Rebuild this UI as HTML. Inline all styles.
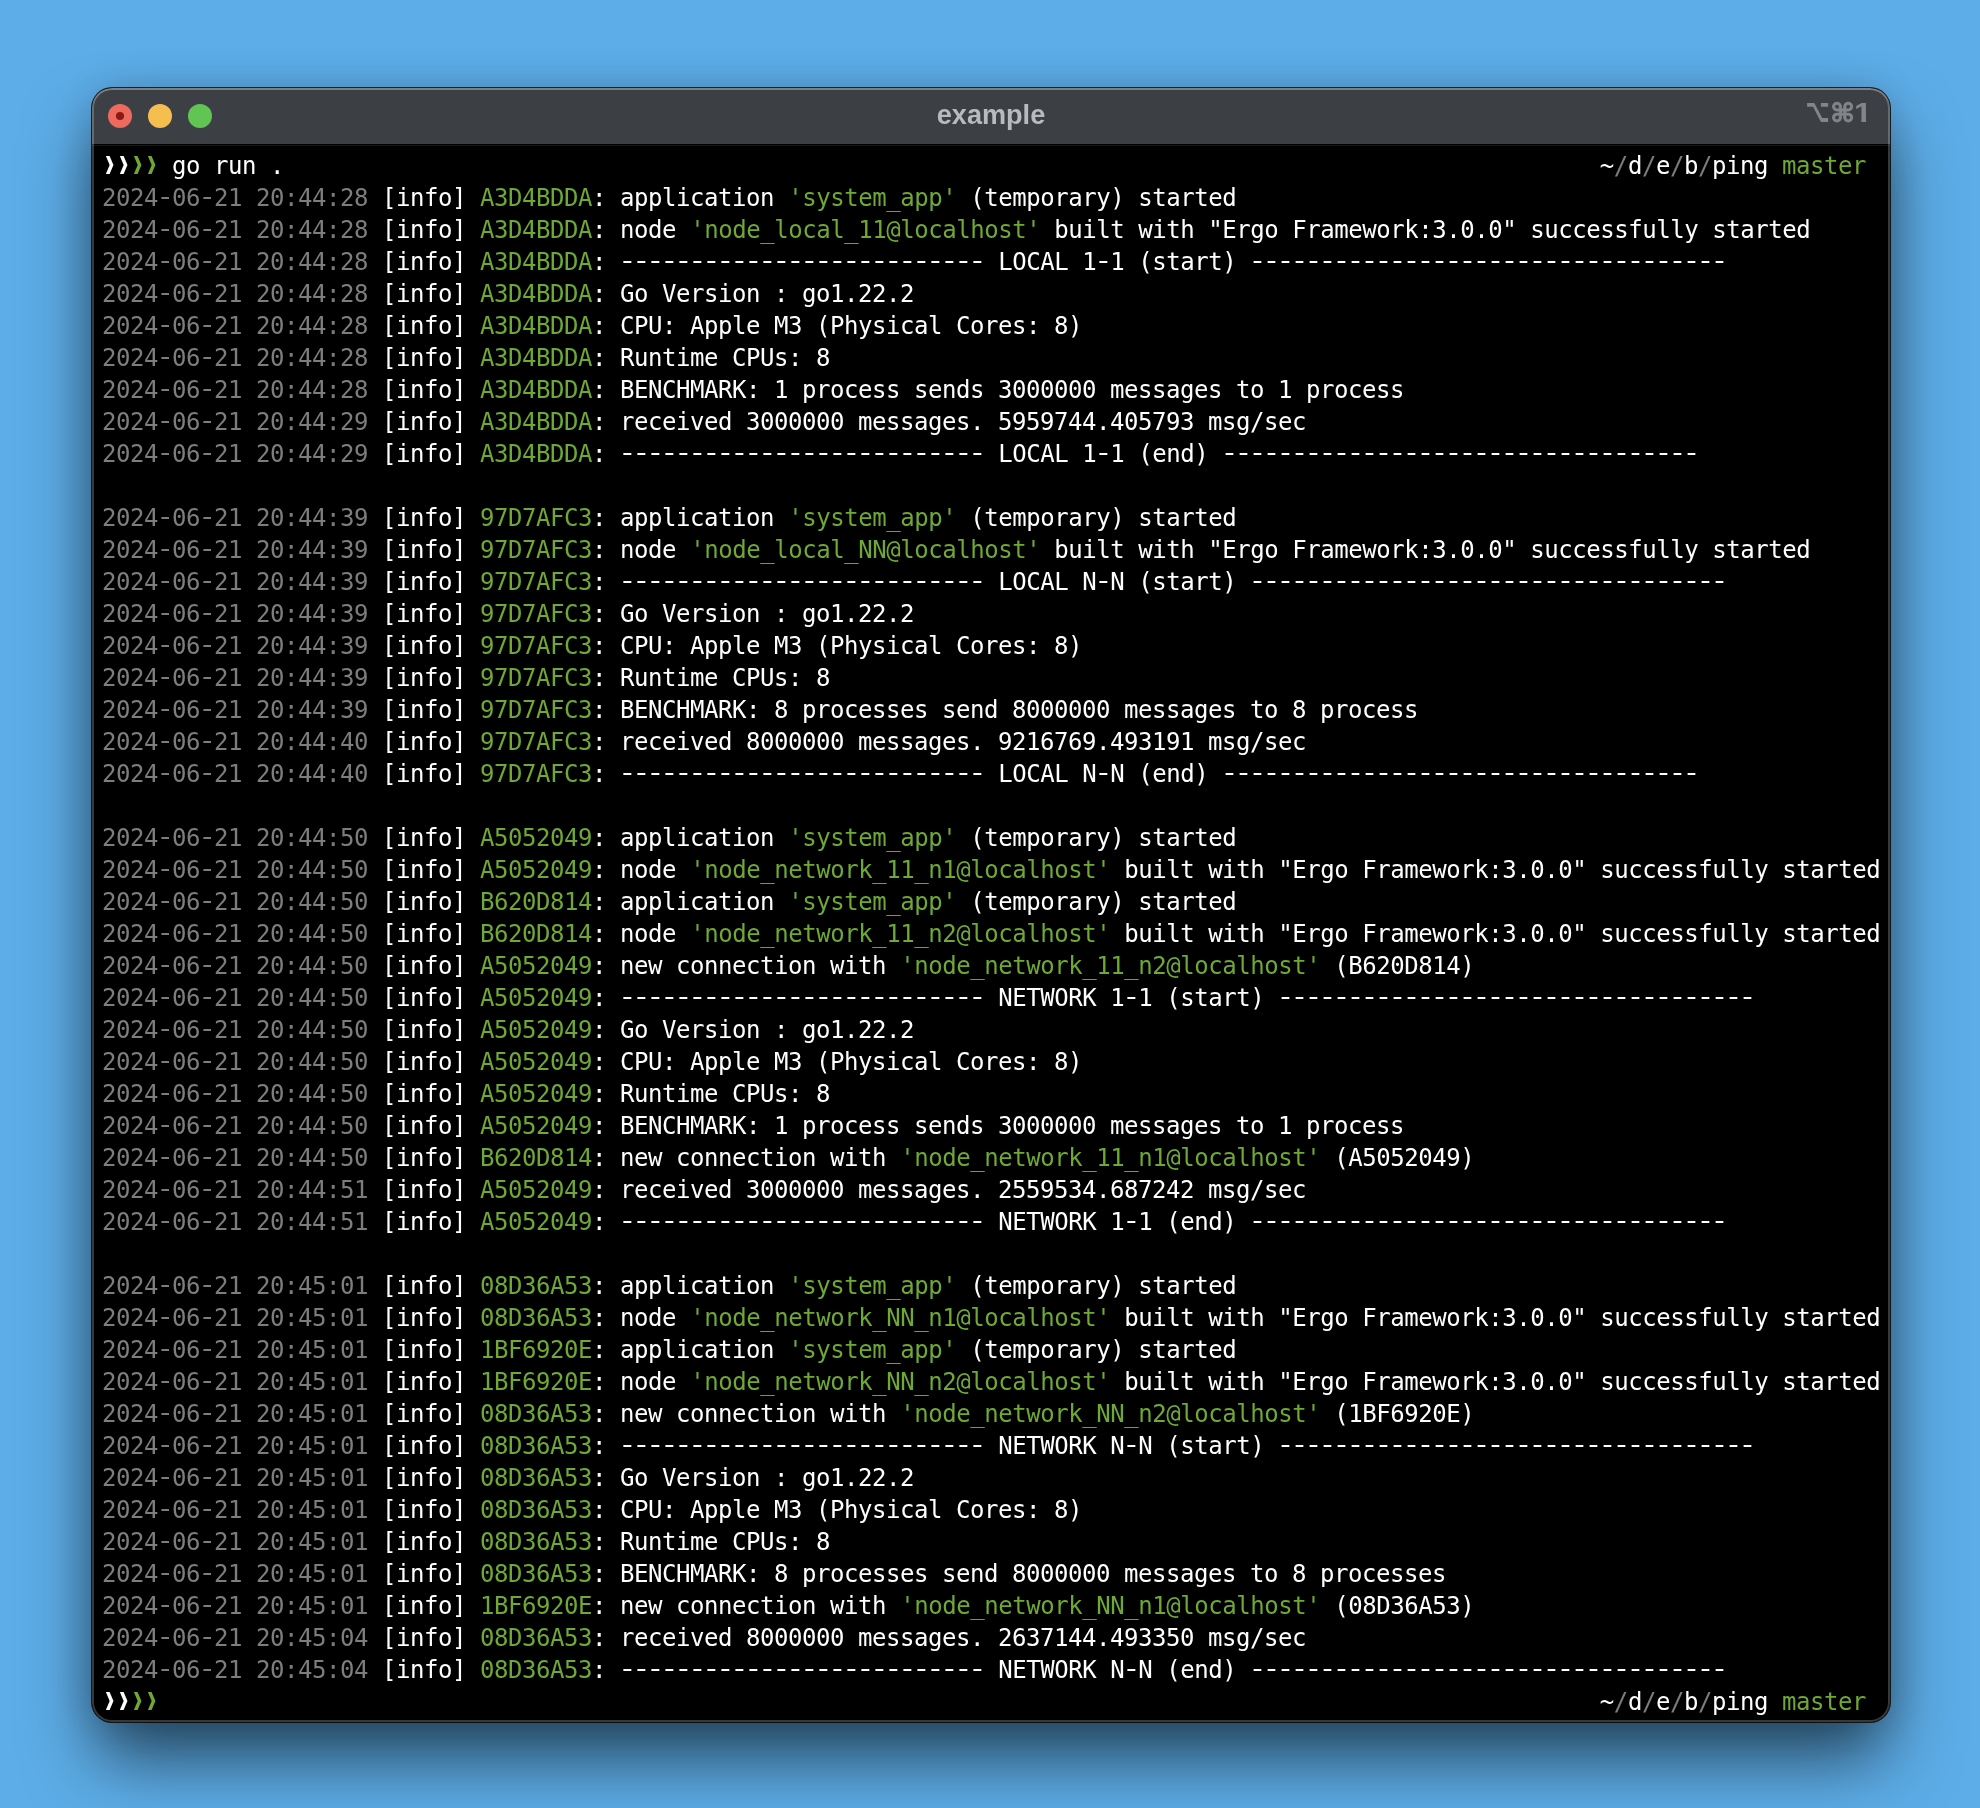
<!DOCTYPE html>
<html lang="en">
<head>
<meta charset="utf-8">
<title>example</title>
<style>
html,body{margin:0;padding:0}
body{width:1980px;height:1808px;overflow:hidden;background:#5dade8;position:relative}
.win{will-change:transform;position:absolute;left:92px;top:88px;width:1798px;height:1634px;border-radius:20px;background:#000;
  box-shadow:0 0 0 1px rgba(0,0,0,.8),0 40px 70px -4px rgba(0,0,0,.6),0 0 44px rgba(0,0,0,.16);overflow:hidden}
.win:after{content:"";position:absolute;left:0;top:0;right:0;bottom:0;border-radius:20px;box-shadow:inset 0 0 0 2px rgba(255,255,255,.22),inset 0 2px 0 rgba(255,255,255,.15);pointer-events:none}
.tb{position:absolute;left:0;top:0;width:100%;height:56px;background:#3c4044;box-shadow:0 1px 0 #000,0 2px 0 #181818}
.tl{position:absolute;top:16px;width:24px;height:24px;border-radius:50%}
.tl.r{left:16px;background:#ec6a5e}
.tl.r i{position:absolute;left:8px;top:8px;width:8px;height:8px;border-radius:50%;background:#8c1a10}
.tl.y{left:56px;background:#f4bf4f}
.tl.gr{left:96px;background:#61c554}
.title{position:absolute;left:0;right:0;top:0;height:56px;text-align:center;font:bold 27.1px/54px "Liberation Sans","DejaVu Sans",sans-serif;color:#b8bbbe}
.sc{position:absolute;left:0;top:0;height:56px;width:100%;color:#82868a}
.sc b{position:absolute;top:0;height:56px;line-height:56px;font-weight:bold;display:block;text-align:center;white-space:nowrap}
.sc .o{left:1714px;width:24px;font:bold 24px/56px "DejaVu Sans",sans-serif;transform:translate(-2px,-5px) scale(.875,1.39)}
.sc .c{left:1739px;width:24px;font:bold 24px/56px "DejaVu Sans",sans-serif;-webkit-text-stroke:.7px #82868a;transform:translate(-.3px,-2.8px) scale(1.11,1.08)}
.sc .n{left:1761.6px;width:15.68px;text-align:left;font:bold 28.2px/56px "Liberation Sans",sans-serif;transform-origin:0 50%;transform:translate(0,-4px) scale(1.14,1);clip-path:polygon(0 0,10.7px 0,10.7px 100%,6.4px 100%,6.4px 34.3px,0 34.3px)}
.term{position:absolute;left:10px;top:62px;right:0;bottom:0;font-family:"DejaVu Sans Mono","Liberation Mono",monospace;font-size:24px;letter-spacing:-0.449px;color:#fff;font-kerning:none;font-variant-ligatures:none}
.l{position:relative;height:32px;line-height:32px;white-space:pre}
.d{color:#7d7d7b}
.g{color:#6ea835}
.rp{position:absolute;right:24px;top:0}
.pr i{display:inline-block;font-style:normal;width:14px;letter-spacing:0;text-align:center;transform:translate(.4px,-1px) scale(.78,.914)}
.h{position:relative;top:-1px;text-shadow:.8px 0 0,-.8px 0 0}

</style>
</head>
<body>
<div class="win">
<div class="tb">
<span class="tl r"><i></i></span><span class="tl y"></span><span class="tl gr"></span>
<div class="title">example</div>
<div class="sc"><b class="o">⌥</b><b class="c">⌘</b><b class="n">1</b></div>
</div>
<div class="term">
<div class="l"><span class="pr"><i>❱</i><i>❱</i><i class="g">❱</i><i class="g">❱</i></span> go run .<span class="rp">~<span class="d">/</span>d<span class="d">/</span>e<span class="d">/</span>b<span class="d">/</span>ping <span class="g">master</span></span></div>
<div class="l"><span class="d">2024<span class="h">-</span>06<span class="h">-</span>21 20:44:28 </span>[info] <span class="g">A3D4BDDA</span>: application <span class="g">'system_app'</span> (temporary) started</div>
<div class="l"><span class="d">2024<span class="h">-</span>06<span class="h">-</span>21 20:44:28 </span>[info] <span class="g">A3D4BDDA</span>: node <span class="g">'node_local_11@localhost'</span> built with "Ergo Framework:3.0.0" successfully started</div>
<div class="l"><span class="d">2024<span class="h">-</span>06<span class="h">-</span>21 20:44:28 </span>[info] <span class="g">A3D4BDDA</span>: <span class="h">--------------------------</span> LOCAL 1<span class="h">-</span>1 (start) <span class="h">----------------------------------</span></div>
<div class="l"><span class="d">2024<span class="h">-</span>06<span class="h">-</span>21 20:44:28 </span>[info] <span class="g">A3D4BDDA</span>: Go Version : go1.22.2</div>
<div class="l"><span class="d">2024<span class="h">-</span>06<span class="h">-</span>21 20:44:28 </span>[info] <span class="g">A3D4BDDA</span>: CPU: Apple M3 (Physical Cores: 8)</div>
<div class="l"><span class="d">2024<span class="h">-</span>06<span class="h">-</span>21 20:44:28 </span>[info] <span class="g">A3D4BDDA</span>: Runtime CPUs: 8</div>
<div class="l"><span class="d">2024<span class="h">-</span>06<span class="h">-</span>21 20:44:28 </span>[info] <span class="g">A3D4BDDA</span>: BENCHMARK: 1 process sends 3000000 messages to 1 process</div>
<div class="l"><span class="d">2024<span class="h">-</span>06<span class="h">-</span>21 20:44:29 </span>[info] <span class="g">A3D4BDDA</span>: received 3000000 messages. 5959744.405793 msg/sec</div>
<div class="l"><span class="d">2024<span class="h">-</span>06<span class="h">-</span>21 20:44:29 </span>[info] <span class="g">A3D4BDDA</span>: <span class="h">--------------------------</span> LOCAL 1<span class="h">-</span>1 (end) <span class="h">----------------------------------</span></div>
<div class="l">&nbsp;</div>
<div class="l"><span class="d">2024<span class="h">-</span>06<span class="h">-</span>21 20:44:39 </span>[info] <span class="g">97D7AFC3</span>: application <span class="g">'system_app'</span> (temporary) started</div>
<div class="l"><span class="d">2024<span class="h">-</span>06<span class="h">-</span>21 20:44:39 </span>[info] <span class="g">97D7AFC3</span>: node <span class="g">'node_local_NN@localhost'</span> built with "Ergo Framework:3.0.0" successfully started</div>
<div class="l"><span class="d">2024<span class="h">-</span>06<span class="h">-</span>21 20:44:39 </span>[info] <span class="g">97D7AFC3</span>: <span class="h">--------------------------</span> LOCAL N<span class="h">-</span>N (start) <span class="h">----------------------------------</span></div>
<div class="l"><span class="d">2024<span class="h">-</span>06<span class="h">-</span>21 20:44:39 </span>[info] <span class="g">97D7AFC3</span>: Go Version : go1.22.2</div>
<div class="l"><span class="d">2024<span class="h">-</span>06<span class="h">-</span>21 20:44:39 </span>[info] <span class="g">97D7AFC3</span>: CPU: Apple M3 (Physical Cores: 8)</div>
<div class="l"><span class="d">2024<span class="h">-</span>06<span class="h">-</span>21 20:44:39 </span>[info] <span class="g">97D7AFC3</span>: Runtime CPUs: 8</div>
<div class="l"><span class="d">2024<span class="h">-</span>06<span class="h">-</span>21 20:44:39 </span>[info] <span class="g">97D7AFC3</span>: BENCHMARK: 8 processes send 8000000 messages to 8 process</div>
<div class="l"><span class="d">2024<span class="h">-</span>06<span class="h">-</span>21 20:44:40 </span>[info] <span class="g">97D7AFC3</span>: received 8000000 messages. 9216769.493191 msg/sec</div>
<div class="l"><span class="d">2024<span class="h">-</span>06<span class="h">-</span>21 20:44:40 </span>[info] <span class="g">97D7AFC3</span>: <span class="h">--------------------------</span> LOCAL N<span class="h">-</span>N (end) <span class="h">----------------------------------</span></div>
<div class="l">&nbsp;</div>
<div class="l"><span class="d">2024<span class="h">-</span>06<span class="h">-</span>21 20:44:50 </span>[info] <span class="g">A5052049</span>: application <span class="g">'system_app'</span> (temporary) started</div>
<div class="l"><span class="d">2024<span class="h">-</span>06<span class="h">-</span>21 20:44:50 </span>[info] <span class="g">A5052049</span>: node <span class="g">'node_network_11_n1@localhost'</span> built with "Ergo Framework:3.0.0" successfully started</div>
<div class="l"><span class="d">2024<span class="h">-</span>06<span class="h">-</span>21 20:44:50 </span>[info] <span class="g">B620D814</span>: application <span class="g">'system_app'</span> (temporary) started</div>
<div class="l"><span class="d">2024<span class="h">-</span>06<span class="h">-</span>21 20:44:50 </span>[info] <span class="g">B620D814</span>: node <span class="g">'node_network_11_n2@localhost'</span> built with "Ergo Framework:3.0.0" successfully started</div>
<div class="l"><span class="d">2024<span class="h">-</span>06<span class="h">-</span>21 20:44:50 </span>[info] <span class="g">A5052049</span>: new connection with <span class="g">'node_network_11_n2@localhost'</span> (B620D814)</div>
<div class="l"><span class="d">2024<span class="h">-</span>06<span class="h">-</span>21 20:44:50 </span>[info] <span class="g">A5052049</span>: <span class="h">--------------------------</span> NETWORK 1<span class="h">-</span>1 (start) <span class="h">----------------------------------</span></div>
<div class="l"><span class="d">2024<span class="h">-</span>06<span class="h">-</span>21 20:44:50 </span>[info] <span class="g">A5052049</span>: Go Version : go1.22.2</div>
<div class="l"><span class="d">2024<span class="h">-</span>06<span class="h">-</span>21 20:44:50 </span>[info] <span class="g">A5052049</span>: CPU: Apple M3 (Physical Cores: 8)</div>
<div class="l"><span class="d">2024<span class="h">-</span>06<span class="h">-</span>21 20:44:50 </span>[info] <span class="g">A5052049</span>: Runtime CPUs: 8</div>
<div class="l"><span class="d">2024<span class="h">-</span>06<span class="h">-</span>21 20:44:50 </span>[info] <span class="g">A5052049</span>: BENCHMARK: 1 process sends 3000000 messages to 1 process</div>
<div class="l"><span class="d">2024<span class="h">-</span>06<span class="h">-</span>21 20:44:50 </span>[info] <span class="g">B620D814</span>: new connection with <span class="g">'node_network_11_n1@localhost'</span> (A5052049)</div>
<div class="l"><span class="d">2024<span class="h">-</span>06<span class="h">-</span>21 20:44:51 </span>[info] <span class="g">A5052049</span>: received 3000000 messages. 2559534.687242 msg/sec</div>
<div class="l"><span class="d">2024<span class="h">-</span>06<span class="h">-</span>21 20:44:51 </span>[info] <span class="g">A5052049</span>: <span class="h">--------------------------</span> NETWORK 1<span class="h">-</span>1 (end) <span class="h">----------------------------------</span></div>
<div class="l">&nbsp;</div>
<div class="l"><span class="d">2024<span class="h">-</span>06<span class="h">-</span>21 20:45:01 </span>[info] <span class="g">08D36A53</span>: application <span class="g">'system_app'</span> (temporary) started</div>
<div class="l"><span class="d">2024<span class="h">-</span>06<span class="h">-</span>21 20:45:01 </span>[info] <span class="g">08D36A53</span>: node <span class="g">'node_network_NN_n1@localhost'</span> built with "Ergo Framework:3.0.0" successfully started</div>
<div class="l"><span class="d">2024<span class="h">-</span>06<span class="h">-</span>21 20:45:01 </span>[info] <span class="g">1BF6920E</span>: application <span class="g">'system_app'</span> (temporary) started</div>
<div class="l"><span class="d">2024<span class="h">-</span>06<span class="h">-</span>21 20:45:01 </span>[info] <span class="g">1BF6920E</span>: node <span class="g">'node_network_NN_n2@localhost'</span> built with "Ergo Framework:3.0.0" successfully started</div>
<div class="l"><span class="d">2024<span class="h">-</span>06<span class="h">-</span>21 20:45:01 </span>[info] <span class="g">08D36A53</span>: new connection with <span class="g">'node_network_NN_n2@localhost'</span> (1BF6920E)</div>
<div class="l"><span class="d">2024<span class="h">-</span>06<span class="h">-</span>21 20:45:01 </span>[info] <span class="g">08D36A53</span>: <span class="h">--------------------------</span> NETWORK N<span class="h">-</span>N (start) <span class="h">----------------------------------</span></div>
<div class="l"><span class="d">2024<span class="h">-</span>06<span class="h">-</span>21 20:45:01 </span>[info] <span class="g">08D36A53</span>: Go Version : go1.22.2</div>
<div class="l"><span class="d">2024<span class="h">-</span>06<span class="h">-</span>21 20:45:01 </span>[info] <span class="g">08D36A53</span>: CPU: Apple M3 (Physical Cores: 8)</div>
<div class="l"><span class="d">2024<span class="h">-</span>06<span class="h">-</span>21 20:45:01 </span>[info] <span class="g">08D36A53</span>: Runtime CPUs: 8</div>
<div class="l"><span class="d">2024<span class="h">-</span>06<span class="h">-</span>21 20:45:01 </span>[info] <span class="g">08D36A53</span>: BENCHMARK: 8 processes send 8000000 messages to 8 processes</div>
<div class="l"><span class="d">2024<span class="h">-</span>06<span class="h">-</span>21 20:45:01 </span>[info] <span class="g">1BF6920E</span>: new connection with <span class="g">'node_network_NN_n1@localhost'</span> (08D36A53)</div>
<div class="l"><span class="d">2024<span class="h">-</span>06<span class="h">-</span>21 20:45:04 </span>[info] <span class="g">08D36A53</span>: received 8000000 messages. 2637144.493350 msg/sec</div>
<div class="l"><span class="d">2024<span class="h">-</span>06<span class="h">-</span>21 20:45:04 </span>[info] <span class="g">08D36A53</span>: <span class="h">--------------------------</span> NETWORK N<span class="h">-</span>N (end) <span class="h">----------------------------------</span></div>
<div class="l"><span class="pr"><i>❱</i><i>❱</i><i class="g">❱</i><i class="g">❱</i></span><span class="rp">~<span class="d">/</span>d<span class="d">/</span>e<span class="d">/</span>b<span class="d">/</span>ping <span class="g">master</span></span></div>
</div>
</div>
</body>
</html>
